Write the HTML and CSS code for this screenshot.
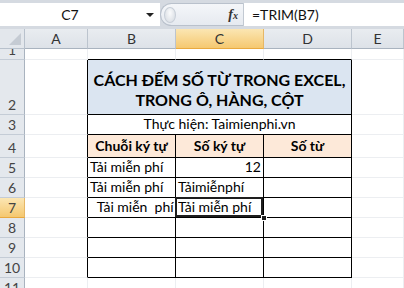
FILE: index.html
```html
<!DOCTYPE html>
<html>
<head>
<meta charset="utf-8">
<link rel="stylesheet" href="styles.css">
</head>
<body>
<div class="app">
  <div class="fbar">
    <div class="namebox"><span class="nb-text">C7</span><span class="nb-arrow"></span></div>
    <div class="fxzone"><span class="grip"></span><span class="fx">f<span class="fxs">x</span></span></div>
    <div class="formula">=TRIM(B7)</div>
  </div>
  <div class="sheet">
    <!-- header row -->
    <div class="corner"><span class="tri"></span></div>
    <div class="ch">A</div><div class="ch">B</div><div class="ch sel">C</div><div class="ch">D</div><div class="ch">E</div>
    <!-- row 1 -->
    <div class="rh">1</div><div class="c"></div><div class="c tt"></div><div class="c tt"></div><div class="c tt"></div><div class="c"></div>
    <!-- row 2 -->
    <div class="rh">2</div><div class="c tl"></div>
    <div class="c t title span3"><div>CÁCH ĐẾM SỐ TỪ TRONG EXCEL,</div><div>TRONG Ô, HÀNG, CỘT</div></div>
    <div class="c"></div>
    <!-- row 3 -->
    <div class="rh">3</div><div class="c tl"></div>
    <div class="c t ctr span3">Thực hiện: Taimienphi.vn</div>
    <div class="c"></div>
    <!-- row 4 -->
    <div class="rh">4</div><div class="c tl"></div>
    <div class="c t hd">Chuỗi ký tự</div><div class="c t hd">Số ký tự</div><div class="c t hd">Số từ</div>
    <div class="c"></div>
    <!-- row 5 -->
    <div class="rh">5</div><div class="c tl"></div>
    <div class="c t">Tải miễn phí</div><div class="c t num">12</div><div class="c t"></div>
    <div class="c"></div>
    <!-- row 6 -->
    <div class="rh">6</div><div class="c tl"></div>
    <div class="c t">Tải miễn phí</div><div class="c t">Tảimiễnphí</div><div class="c t"></div>
    <div class="c"></div>
    <!-- row 7 -->
    <div class="rh sel">7</div><div class="c tl"></div>
    <div class="c t pre">  Tải miễn  phí</div><div class="c t active">Tải miễn phí<span class="handle"></span></div><div class="c t"></div>
    <div class="c"></div>
    <!-- row 8 -->
    <div class="rh">8</div><div class="c tl"></div>
    <div class="c t"></div><div class="c t"></div><div class="c t"></div>
    <div class="c"></div>
    <!-- row 9 -->
    <div class="rh">9</div><div class="c tl"></div>
    <div class="c t"></div><div class="c t"></div><div class="c t"></div>
    <div class="c"></div>
    <!-- row 10 -->
    <div class="rh">10</div><div class="c tl"></div>
    <div class="c t"></div><div class="c t"></div><div class="c t"></div>
    <div class="c"></div>
    <!-- row 11 -->
    <div class="rh">11</div><div class="c"></div><div class="c"></div><div class="c"></div><div class="c"></div><div class="c"></div>
  </div>
</div>
</body>
</html>
```

FILE: styles.css
```css
* { box-sizing: border-box; }
html, body { margin: 0; padding: 0; background: #fff; }
body { width: 404px; height: 288px; overflow: hidden; font-family: Lato, "Open Sans", sans-serif; color: #000; }

.app { display: flex; flex-direction: column; width: 404px; }

.fbar {
  display: flex;
  height: 29px;
  background: #d5dae1;
  padding: 3px 0 3px 0;
}
.namebox {
  width: 160px;
  background: #fff;
  display: flex;
  align-items: center;
  position: relative;
}
.nb-text { width: 140px; text-align: center; font-size: 14px; color: #111; }
.nb-arrow {
  width: 0; height: 0;
  border-left: 4px solid transparent;
  border-right: 4px solid transparent;
  border-top: 4px solid #222;
  margin-left: 6px;
}
.fxzone {
  width: 84px;
  background: linear-gradient(#f4f6f9, #e6eaf0);
  border-radius: 12px 0 0 12px;
  border: 1px solid #b9c1cc;
  border-right: 1px solid #c2c9d2;
  display: flex;
  align-items: center;
  position: relative;
}
.grip {
  width: 12px; height: 16px;
  margin-left: 3px;
  border-radius: 50%;
  background: radial-gradient(ellipse at 50% 35%, #fafbfc 0%, #dfe3e8 70%);
  border: 1px solid #c7ced7;
}
.fx {
  margin-left: auto;
  margin-right: 5px;
  font-family: "Liberation Serif", serif;
  font-style: italic;
  font-weight: bold;
  font-size: 14px;
  color: #333;
}
.fxs { font-size: 10px; }
.formula {
  flex: 1;
  background: #fff;
  display: flex;
  align-items: center;
  padding-left: 8px;
  font-size: 14px;
  color: #111;
}

.sheet {
  display: grid;
  grid-template-columns: 25px 63px 88px 88px 88px 52px;
  grid-template-rows: 20px 11px 55px 20px 23px repeat(6, 20px) 20px;
  font-size: 14px;
}
.corner {
  background: #e3e7ec;
  border-right: 1px solid #b8c1cc;
  border-bottom: 1px solid #b8c1cc;
  position: relative;
}
.tri {
  position: absolute; right: 3px; bottom: 3px;
  width: 0; height: 0;
  border-left: 12px solid transparent;
  border-bottom: 12px solid #c5cbd3;
}
.ch {
  background: linear-gradient(#e9ecf0, #dde2e8);
  border-right: 1px solid #bcc4ce;
  border-bottom: 1px solid #a9b3bf;
  display: flex; align-items: center; justify-content: center;
  color: #333;
  font-size: 14px;
}
.ch.sel, .rh.sel {
  background: linear-gradient(#fbe6b3, #f5c870);
  border-bottom-color: #e9a93f;
  border-right-color: #e6b766;
}
.rh {
  background: #e4e8ed;
  border-right: 1px solid #a9b3bf;
  border-bottom: 1px solid #c4ccd6;
  display: flex; align-items: flex-end; justify-content: center;
  color: #444;
  font-size: 14px;
  line-height: 18px;
  overflow: hidden;
}
.c {
  border-right: 1px solid #eceef1;
  border-bottom: 1px solid #eceef1;
  display: flex;
  align-items: flex-end;
  padding: 0 2px 1px 2px;
  white-space: nowrap;
  overflow: visible;
  line-height: 18px;
}
.c.tt { border-bottom-color: #000; }
.c.tl { border-right-color: #000; }
.c.t { border-right-color: #000; border-bottom-color: #000; }
.span3 { grid-column: span 3; }
.title {
  background: #dbe5f1;
  flex-direction: column;
  align-items: center;
  justify-content: flex-end;
  font-weight: bold;
  font-size: 16px;
  line-height: 20px;
  padding-bottom: 4px;
}
.ctr { justify-content: center; }
.hd { background: #fde9d9; font-weight: bold; justify-content: center; padding-bottom: 2px; }
.num { justify-content: flex-end; }
.pre { white-space: pre; }
.active { position: relative; }
.active::after {
  content: "";
  position: absolute;
  left: -1px; top: -1px; right: 0; bottom: 0;
  border: 2px solid #1e1e1e;
  box-shadow: inset 0 0 0 1px #fff;
  pointer-events: none;
}
.handle {
  position: absolute;
  right: -4px; bottom: -4px;
  width: 6px; height: 6px;
  background: #1e1e1e;
  border: 1px solid #fff;
  z-index: 2;
}
```
